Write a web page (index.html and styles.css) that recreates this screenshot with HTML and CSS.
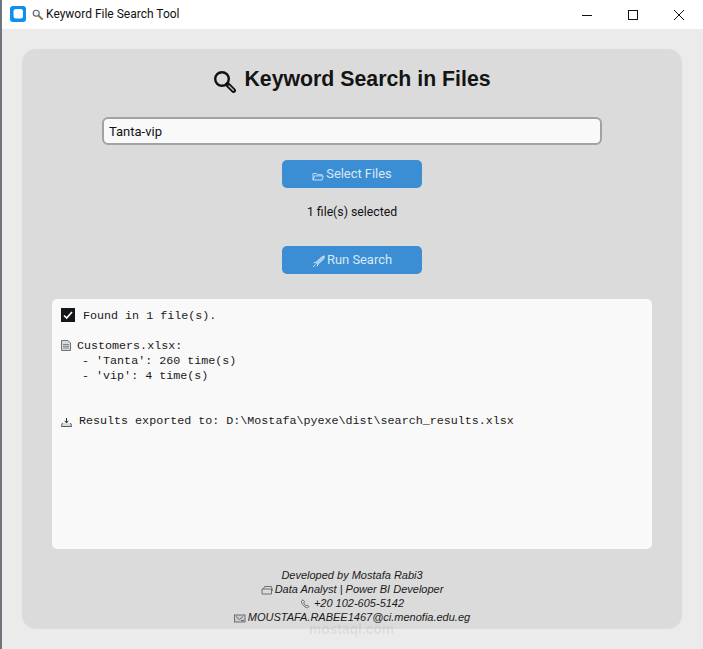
FILE: index.html
```html
<!DOCTYPE html>
<html lang="en">
<head>
<meta charset="utf-8">
<title>Keyword File Search Tool</title>
<link rel="stylesheet" href="styles.css">
</head>
<body>
<div class="window">
  <header class="titlebar">
    <svg class="app-icon" viewBox="0 0 16 16"><rect width="16" height="16" rx="3" fill="#0f8fee"/><rect x="3.500" y="3" width="9.500" height="9.500" rx="2.500" fill="#fff"/></svg>
    <svg class="tiny-lens" viewBox="0 0 11 11"><circle cx="4.200" cy="4.200" r="3" fill="#eef3f6" stroke="#59636b" stroke-width="1.100"/><path d="M6.600 6.600 10 10" stroke="#8a6d3f" stroke-width="1.800" stroke-linecap="round"/></svg>
    <span class="window-title">Keyword File Search Tool</span>
    <div class="controls">
      <svg class="ctl" viewBox="0 0 46 20"><path d="M18 10.500h10" stroke="#111" fill="none"/></svg>
      <svg class="ctl" viewBox="0 0 46 20"><rect x="18.500" y="5.500" width="9" height="9" stroke="#111" fill="none"/></svg>
      <svg class="ctl" viewBox="0 0 46 20"><path d="M18 5l10 10M28 5 18 15" stroke="#111" fill="none"/></svg>
    </div>
  </header>
  <main class="content">
    <section class="card">
      <h1 class="heading">
        <svg class="lens" viewBox="0 0 23 23"><circle cx="9" cy="9" r="6.800" fill="none" stroke="#111" stroke-width="2.400"/><path d="M14.500 14.500 20.500 20.500" stroke="#111" stroke-width="4.800" stroke-linecap="round"/><path d="M16 16 20.300 20.300" stroke="#c9b9a0" stroke-width="1.400" stroke-linecap="round"/></svg>
        <span>Keyword Search in Files</span>
      </h1>
      <input class="search" type="text" value="Tanta-vip">
      <button class="btn btn-select" type="button">
        <svg class="btn-icon" viewBox="0 0 12 12"><path d="M1 10V3.500h3.500l1 1.200H10v1.200M1 10l1.600-4.100H11.200L10 10z" fill="none" stroke="#d4e6f5" stroke-width=".9"/></svg>
        <span>Select Files</span>
      </button>
      <p class="status">1 file(s) selected</p>
      <button class="btn btn-run" type="button">
        <svg class="btn-icon rocket" viewBox="0 0 12 12"><path d="M3.500 7 8.500 2.200 11.500.8 10.700 3.800 5.300 8.800z" fill="#a9cdec" stroke="#d4e6f5" stroke-width=".8"/><path d="M3.500 6.500 1.500 7.300M5.500 8.500 4.700 10.500M3.300 8.800 1 11" fill="none" stroke="#d4e6f5" stroke-width=".9"/></svg>
        <span>Run Search</span>
      </button>
      <div class="results">
        <div class="line"><svg class="check" viewBox="0 0 14 14"><rect width="14" height="14" fill="#14181d"/><path d="M3 7.500 5.700 10 11 4" stroke="#fff" stroke-width="1.700" fill="none"/></svg> Found in 1 file(s).</div>
        <div class="line"> </div>
        <div class="line"><svg class="doc" viewBox="0 0 10 11"><path d="M.5.500h6.500l2.500 2.500v7.500h-9z" fill="#d5d9dc" stroke="#6f7477"/><path d="M2 4.500h6M2 6.300h6M2 8h6" stroke="#6f7477" stroke-width=".8"/></svg>Customers.xlsx:</div>
        <div class="line">   - 'Tanta': 260 time(s)</div>
        <div class="line">   - 'vip': 4 time(s)</div>
        <div class="line"> </div>
        <div class="line"> </div>
        <div class="line"><svg class="tray" viewBox="0 0 11 9"><path d="M5.500 0v4M3.800 2.800 5.500 5l1.700-2.200" stroke="#333" fill="none"/><path d="M1.500 5 .5 7.500v1h10v-1L9.500 5" fill="#d8dcdf" stroke="#333" stroke-width=".8"/></svg>Results exported to: D:\Mostafa\pyexe\dist\search_results.xlsx</div>
      </div>
      <footer class="credits">
        <div>Developed by Mostafa Rabi3</div>
        <div><svg class="foot-icon" viewBox="0 0 12 10"><path d="M1 9V4h9.500v5zM2.500 4l1-2.500h7L11.500 6" fill="none" stroke="#555" stroke-width=".8"/></svg>Data Analyst | Power BI Developer</div>
        <div><svg class="foot-icon" viewBox="0 0 12 10"><path d="M3 .8 1.500 2c0 3 2.500 6 6 7l1.500-1.500L7 6 5.800 6.800C4.800 6 4 5 3.800 3.800L4.700 2.800z" fill="none" stroke="#555" stroke-width=".8"/></svg>+20 102-605-5142</div>
        <div><svg class="foot-icon" viewBox="0 0 12 10"><rect x=".5" y="2" width="10.500" height="7" fill="#c8ccd0" stroke="#555" stroke-width=".8"/><path d="M2 3.500l3.500 3 3.500-3M7 7.500h3" fill="none" stroke="#555" stroke-width=".8"/></svg>MOUSTAFA.RABEE1467@ci.menofia.edu.eg</div>
      </footer>
    </section>
    <div class="watermark">mostaql.com</div>
  </main>
</div>
</body>
</html>
```
FILE: styles.css
```css
* { box-sizing: border-box; }
html, body { margin: 0; height: 100%; }
body { background: #ebebeb; overflow: hidden; }

.window {
  width: 703px;
  height: 649px;
  border-left: 2px solid #70757c;
  display: flex;
  flex-direction: column;
  font-family: "Liberation Sans", Arial, sans-serif;
  color: #111;
}

.titlebar {
  height: 29px;
  flex: none;
  background: #fff;
  display: flex;
  align-items: center;
  padding-left: 8px;
}
.app-icon { width: 16px; height: 16px; margin-top: -1px; flex: none; }
.tiny-lens { width: 11px; height: 11px; margin-left: 6px; flex: none; }
.window-title {
  font-family: Roboto, "Liberation Sans", sans-serif;
  font-size: 12px;
  margin-left: 3px;
  color: #111;
  position: relative;
  top: -1px;
}
.controls { margin-left: auto; display: flex; align-items: center; padding-right: 1px; }
.ctl { width: 46px; height: 20px; display: block; }

.content {
  position: relative;
  flex: 1;
  padding: 20px 19px 20px 20px;
}

.card {
  width: 660px;
  height: 580px;
  background: #dbdbdb;
  border-radius: 14px;
  display: flex;
  flex-direction: column;
  align-items: center;
}

.heading {
  margin: 16px 0 0;
  height: 28px;
  font-size: 21.3px;
  line-height: 28px;
  font-weight: 700;
  display: flex;
  align-items: center;
  color: #141414;
}
.lens { width: 23px; height: 23px; margin: 4px 8px 0 0; flex: none; }

.search {
  margin-top: 24px;
  width: 500px;
  height: 28px;
  flex: none;
  border: 2px solid #a0a3a6;
  border-radius: 6px;
  background: #f9f9f9;
  padding: 0 5px;
  font-family: Roboto, "Liberation Sans", sans-serif;
  font-size: 13px;
  color: #111;
  outline: none;
}

.btn {
  width: 140px;
  height: 28px;
  flex: none;
  border: 0;
  border-radius: 5px;
  background: #3b8ed4;
  color: #d9e8f5;
  font-family: Roboto, "Liberation Sans", sans-serif;
  font-size: 12.9px;
  display: flex;
  align-items: center;
  justify-content: center;
  gap: 2px;
  padding: 0 0 2px;
}
.btn-select { margin-top: 15px; }
.btn-run { margin-top: 26px; }
.btn-icon { width: 12px; height: 12px; margin-top: 5px; flex: none; }
.rocket { width: 13px; height: 13px; margin-top: 4px; }

.status {
  margin: 16px 0 0;
  height: 16px;
  font-family: Roboto, "Liberation Sans", sans-serif;
  font-size: 12.25px;
  line-height: 16px;
  color: #111;
}

.results {
  margin-top: 25px;
  width: 600px;
  height: 250px;
  flex: none;
  background: #f9f9f9;
  border-radius: 5px;
  padding: 10px 9px;
  font-family: "Liberation Mono", "Courier New", monospace;
  font-size: 11.7px;
  line-height: 15px;
  color: #1a1a1a;
}
.line { height: 15px; white-space: pre; }
.line svg { vertical-align: -2px; }
.line .check { width: 14px; height: 14px; margin-right: 1px; vertical-align: -4px; transform: translateY(-1px); }
.doc { width: 10px; height: 11px; margin-right: 6px; }
.line .tray { width: 11px; height: 9px; margin-right: 7px; vertical-align: -3px; }

.credits {
  margin-top: 19px;
  font-size: 11px;
  line-height: 14px;
  font-style: italic;
  text-align: center;
  color: #1a1a1a;
}
.foot-icon { width: 12px; height: 10px; margin-right: 2px; vertical-align: -2px; }

.watermark {
  position: absolute;
  left: 307px;
  top: 596px;
  font-size: 13.8px;
  font-weight: 700;
  color: rgba(0, 0, 0, 0.07);
  line-height: 9px;
}
```
